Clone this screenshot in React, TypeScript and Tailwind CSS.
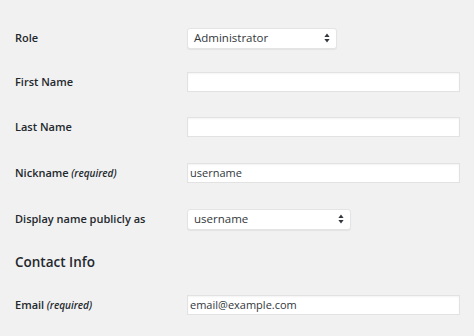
import React from "react";

const font = { fontFamily: '"Open Sans", "Noto Sans", sans-serif' };

function Arrows() {
  return (
    <svg width="6" height="10" viewBox="0 0 6 10" className="absolute right-[6px] top-1/2 -translate-y-1/2">
      <path d="M3 0.5 L5.6 4 L0.4 4 Z" fill="#32373c" />
      <path d="M3 9.5 L5.6 6 L0.4 6 Z" fill="#32373c" />
    </svg>
  );
}

function Select({ value, width }: { value: string; width: string }) {
  return (
    <div
      className={`relative h-[21px] ${width} bg-white border border-[#e4e4e4] rounded-[3px] shadow-[0_1px_1px_rgba(0,0,0,0.06)] flex items-center pl-[6px] text-[11.5px] text-[#32373c]`}
    >
      {value}
      <Arrows />
    </div>
  );
}

function Input({ value, width }: { value?: string; width: string }) {
  return (
    <div
      className={`h-[20px] ${width} bg-white border border-[#e2e2e2] shadow-[inset_0_1px_2px_rgba(0,0,0,0.05)] flex items-center pl-[2px] text-[11px] text-[#32373c]`}
    >
      {value}
    </div>
  );
}

function Row({ label, req, h, children }: { label: string; req?: boolean; h: string; children: React.ReactNode }) {
  return (
    <div className={`flex items-center ${h}`}>
      <div className="w-[172px] text-[11px] font-semibold text-[#23282d]">
        {label}
        {req && <span className="italic font-semibold text-[10px]"> (required)</span>}
      </div>
      {children}
    </div>
  );
}

export default function App() {
  return (
    <div className="w-[474px] h-[336px] bg-[#f1f1f1] overflow-hidden pl-[15px] pt-[16px]" style={font}>
      <Row label="Role" h="h-[44px]">
        <Select value="Administrator" width="w-[150px]" />
      </Row>
      <Row label="First Name" h="h-[44px]">
        <Input width="w-[273px]" />
      </Row>
      <Row label="Last Name" h="h-[46px]">
        <Input width="w-[273px]" />
      </Row>
      <Row label="Nickname" req h="h-[46px]">
        <Input value="username" width="w-[273px]" />
      </Row>
      <Row label="Display name publicly as" h="h-[46px]">
        <Select value="username" width="w-[164px]" />
      </Row>
      <div className="h-[40px] flex items-center text-[13.5px] font-semibold text-[#23282d]">Contact Info</div>
      <Row label="Email" req h="h-[46px]">
        <Input value="email@example.com" width="w-[273px]" />
      </Row>
    </div>
  );
}
